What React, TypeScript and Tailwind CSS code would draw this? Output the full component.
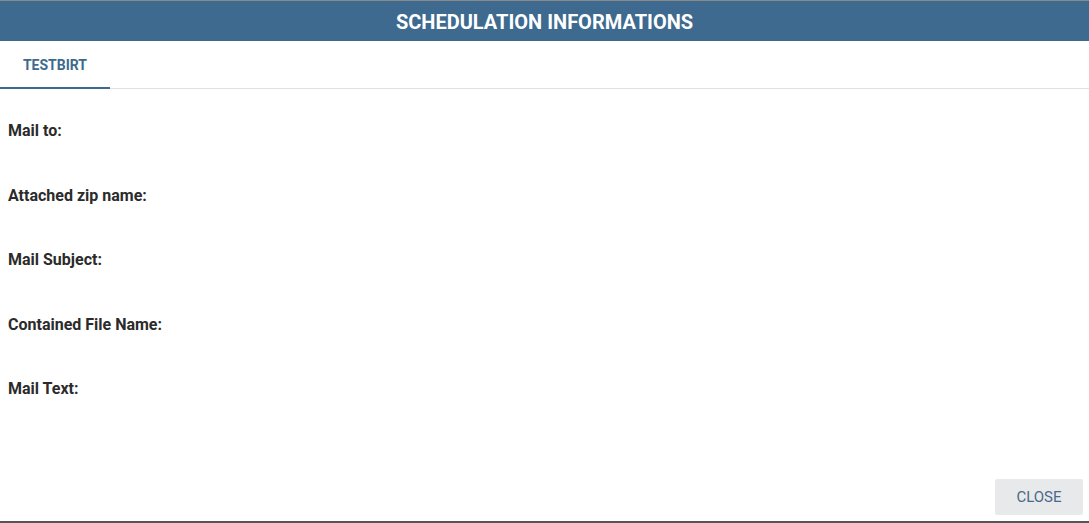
import React from "react";

export default function App() {
  const labels = ["Mail to:", "Attached zip name:", "Mail Subject:", "Contained File Name:", "Mail Text:"];
  return (
    <div className="w-[1089px] h-[523px] bg-[#6b6b6b] flex flex-col" style={{ fontFamily: "Roboto, 'Liberation Sans', sans-serif" }}>
      <div className="h-px bg-[#8a8a8a]" />
      <div className="flex-1 bg-white flex flex-col">
        <div className="h-[40px] pt-[2px] bg-[#3d6a8e] flex items-center justify-center">
          <span className="text-white font-bold text-[20px] leading-[24px]">SCHEDULATION INFORMATIONS</span>
        </div>
        <div className="border-b border-[#e0e0e0] flex">
          <div className="w-[110px] h-[48px] pt-[2px] flex items-center justify-center border-b-2 border-[#3d6a8e] mb-[-1px]">
            <span className="text-[#3d6a8e] font-bold text-[14px]">TESTBIRT</span>
          </div>
        </div>
        <div className="flex flex-col px-2 pt-[32px]">
          {labels.map((l) => (
            <div key={l} className="h-[64.5px] text-[16px] font-bold text-[#2b2b2b] leading-[20px]">
              {l}
            </div>
          ))}
        </div>
        <div className="flex-1" />
        <div className="flex justify-end pr-[6px] pb-[6px]">
          <button className="w-[88px] h-[36px] bg-[#e8e9ea] rounded-[2px] text-[#4b6a8a] text-[15px]">CLOSE</button>
        </div>
      </div>
      <div className="h-[2px] bg-[#555]" />
    </div>
  );
}
